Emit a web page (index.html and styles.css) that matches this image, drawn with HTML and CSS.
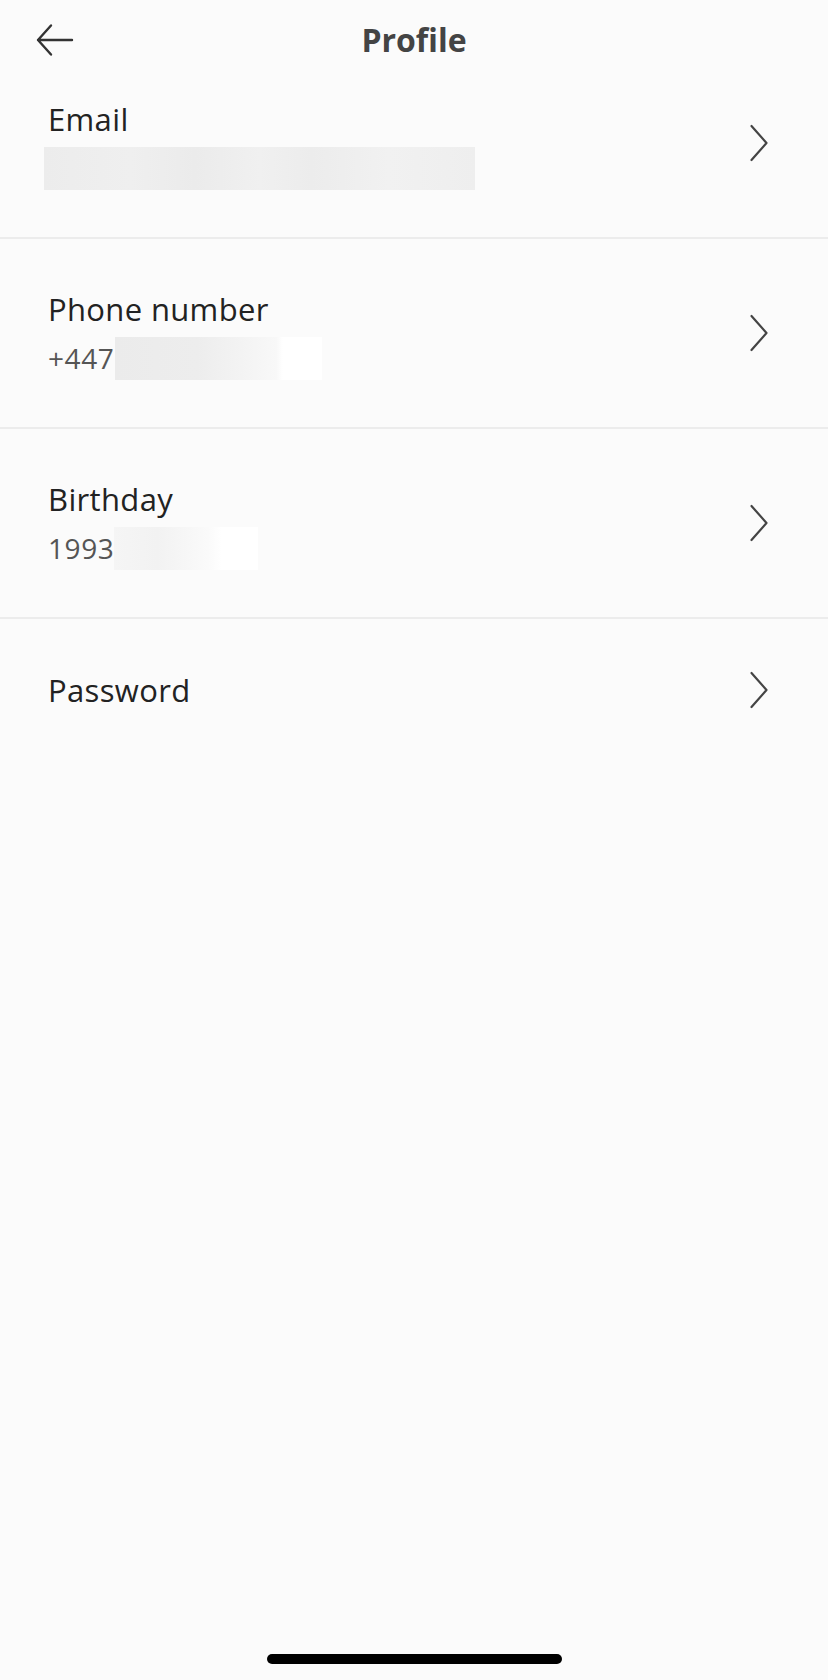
FILE: index.html
```html
<!DOCTYPE html>
<html lang="en">
<head>
    <meta charset="UTF-8">
    <meta name="viewport" content="width=device-width, initial-scale=1.0">
    <title>Profile</title>
    <link rel="stylesheet" href="styles.css">
</head>
<body>
    <div class="page">
        <header class="topbar">
            <a class="back" href="#" aria-label="Back">
                <svg width="40" height="40" viewBox="0 0 40 40">
                    <path d="M37 20H3M16 5.5L3 20L16 34.5" fill="none" stroke="#333" stroke-width="2.4" stroke-linecap="round" stroke-linejoin="round"/>
                </svg>
            </a>
            <h1>Profile</h1>
            <span></span>
        </header>

        <!-- Profile fields -->
        <div class="list">
            <a class="row" href="#">
                <div class="field">
                    <span class="label">Email</span>
                    <span class="value">
                        <span class="blur blur-email"></span>
                    </span>
                </div>
                <svg class="chevron" width="20" height="40" viewBox="0 0 20 40">
                    <path d="M2.5 3L17.5 20L2.5 37" fill="none" stroke="#444" stroke-width="2.2" stroke-linecap="round" stroke-linejoin="round"/>
                </svg>
            </a>
            <a class="row" href="#">
                <div class="field">
                    <span class="label">Phone number</span>
                    <span class="value">+447<span class="blur blur-phone"></span></span>
                </div>
                <svg class="chevron" width="20" height="40" viewBox="0 0 20 40">
                    <path d="M2.5 3L17.5 20L2.5 37" fill="none" stroke="#444" stroke-width="2.2" stroke-linecap="round" stroke-linejoin="round"/>
                </svg>
            </a>
            <a class="row" href="#">
                <div class="field">
                    <span class="label">Birthday</span>
                    <span class="value">1993<span class="blur blur-birthday"></span></span>
                </div>
                <svg class="chevron" width="20" height="40" viewBox="0 0 20 40">
                    <path d="M2.5 3L17.5 20L2.5 37" fill="none" stroke="#444" stroke-width="2.2" stroke-linecap="round" stroke-linejoin="round"/>
                </svg>
            </a>
            <a class="row row-last" href="#">
                <div class="field">
                    <span class="label">Password</span>
                </div>
                <svg class="chevron" width="20" height="40" viewBox="0 0 20 40">
                    <path d="M2.5 3L17.5 20L2.5 37" fill="none" stroke="#444" stroke-width="2.2" stroke-linecap="round" stroke-linejoin="round"/>
                </svg>
            </a>
        </div>

        <div class="home-bar"></div>
    </div>
</body>
</html>
```

FILE: styles.css
```css
body {
    margin: 0;
    padding: 0;
    background-color: #fbfbfb;
    font-family: "Open Sans", "Liberation Sans", sans-serif;
    color: #222;
}
.page {
    min-height: 1680px;
    display: flex;
    flex-direction: column;
}
.topbar {
    box-sizing: border-box;
    height: 49px;
    padding-top: 13px;
    display: grid;
    grid-template-columns: 1fr auto 1fr;
    align-items: start;
}
.back {
    display: block;
    margin: 7px 0 0 35px;
    width: 40px;
    height: 40px;
}
.back svg {
    display: block;
}
.topbar h1 {
    margin: 0;
    font-size: 32px;
    line-height: 54px;
    font-weight: 700;
    color: #444;
}
.list {
    display: flex;
    flex-direction: column;
}
.row {
    box-sizing: border-box;
    height: 190px;
    padding: 0 59px 0 48px;
    display: flex;
    align-items: center;
    justify-content: space-between;
    border-bottom: 2px solid #ececec;
    text-decoration: none;
    color: inherit;
}
.row-last {
    height: 142px;
    border-bottom: none;
}
.field {
    display: flex;
    flex-direction: column;
    gap: 8px;
}
.label {
    padding-top: 2px;
    font-size: 31px;
    line-height: 40px;
    letter-spacing: 0.35px;
    color: #222;
}
.row-last .label {
    padding-top: 0;
}
.value {
    display: flex;
    align-items: center;
    height: 43px;
    font-size: 28px;
    line-height: 43px;
    letter-spacing: 0.6px;
    color: #555;
}
.blur {
    display: block;
    height: 43px;
}
.blur-email {
    width: 431px;
    margin-left: -4px;
    background: linear-gradient(90deg, #ececec 0%, #efefef 20%, #ebebeb 35%, #f0f0f0 50%, #ececec 62%, #f1f1f1 80%, #eeeeee 100%);
}
.blur-phone {
    width: 207px;
    margin-left: 1px;
    background: linear-gradient(90deg, #ebebeb 0%, #ededed 40%, #f8f8f8 78%, #ffffff 81%, #ffffff 100%);
}
.blur-birthday {
    width: 144px;
    margin-left: 0;
    background: linear-gradient(90deg, #f5f5f5 0%, #f2f2f2 30%, #fafafa 65%, #ffffff 75%, #ffffff 100%);
}
.chevron {
    display: block;
    flex-shrink: 0;
}
.home-bar {
    margin-top: auto;
    margin-bottom: 16px;
    align-self: center;
    width: 295px;
    height: 10px;
    border-radius: 5px;
    background-color: #000;
}
```
